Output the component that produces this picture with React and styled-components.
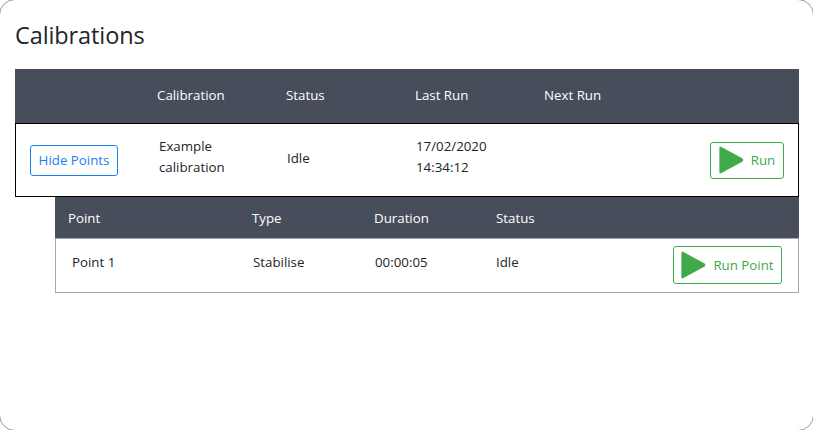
import React from "react";
import styled, { createGlobalStyle } from "styled-components";

const GlobalStyle = createGlobalStyle`
	html, body {
		margin: 0;
		padding: 0;
		background: #fff;
		overflow: hidden;
	}
	body {
		font-family: "Open Sans", "Noto Sans", sans-serif;
		font-size: 13.3px;
		color: #212529;
	}
`;

const Clip = styled.div`
	width: 813px;
	height: 430px;
	overflow: hidden;
`;

const Page = styled.div`
	box-sizing: border-box;
	width: 815px;
	height: 432px;
	margin: -1px;
	padding: 16px 15px 0;
	border: 1px solid #9a9a9a;
	border-radius: 16px;
	background: #fff;
`;

const Title = styled.h1`
	margin: 0 0 17px;
	height: 36px;
	line-height: 39px;
	font-size: 23.5px;
	font-weight: 400;
	letter-spacing: -0.1px;
	color: #212529;
`;

const Content = styled.div`
	width: 784px;
`;

const HeadRow = styled.div`
	box-sizing: border-box;
	display: grid;
	grid-template-columns: ${(props) => props.$columns};
	align-items: center;
	height: ${(props) => props.$height}px;
	padding-bottom: ${(props) => props.$lift || 0}px;
	background: #484d5b;
	color: #fff;
`;

const CalibrationRow = styled.div`
	box-sizing: border-box;
	display: grid;
	grid-template-columns: 143px 128px 129px 129px 1fr;
	align-items: center;
	height: 74px;
	border: 1px solid #000;
	line-height: 21px;
`;

const Points = styled.div`
	margin-left: 40px;
`;

const PointRow = styled.div`
	box-sizing: border-box;
	display: grid;
	grid-template-columns: 181px 122px 121px 1fr auto;
	align-items: center;
	height: 55px;
	padding-left: 16px;
	padding-right: 16px;
	border: 1px solid #a5a7ad;
`;

const Cell = styled.div`
	padding-left: ${(props) => props.$pad || 0}px;
	margin-top: ${(props) => props.$up || 0}px;
`;

const OutlineButton = styled.button`
	box-sizing: border-box;
	display: inline-flex;
	align-items: center;
	justify-content: center;
	gap: ${(props) => props.$gap || 0}px;
	height: ${(props) => props.$height}px;
	width: ${(props) => props.$width}px;
	margin-top: ${(props) => props.$up || 0}px;
	padding: 0;
	background: #fff;
	border: 1px solid ${(props) => props.$color};
	border-radius: 3px;
	color: ${(props) => props.$color};
	font-family: inherit;
	font-size: 13.3px;
`;

const ButtonCell = styled.div`
	display: flex;
	justify-content: ${(props) => props.$align || "flex-start"};
	padding: ${(props) => props.$padding || 0};
`;

const Play = () => (
	<svg width="25" height="28" viewBox="0 0 25 28">
		<path
			d="M2 0.8 L23.6 12.4 Q25 14 23.6 15.6 L2 27.2 Q0.4 27.6 0.4 26 L0.4 2 Q0.4 0.4 2 0.8 Z"
			fill="#40a94a"
		/>
	</svg>
);

const App = () => {
	return (
		<Clip>
			<GlobalStyle />
			<Page>
				<Title>Calibrations</Title>
				<Content>
					<HeadRow $columns="142px 129px 129px 129px 1fr" $height={54} $lift={2}>
						<span />
						<span>Calibration</span>
						<span>Status</span>
						<span>Last Run</span>
						<span>Next Run</span>
					</HeadRow>
					<CalibrationRow>
						<ButtonCell $padding="0 0 0 14px">
							<OutlineButton $color="#1b80f5" $width={88} $height={31}>
								Hide Points
							</OutlineButton>
						</ButtonCell>
						<Cell $up={-6}>
							Example
							<br />
							calibration
						</Cell>
						<Cell $up={-3}>Idle</Cell>
						<Cell $up={-6}>
							17/02/2020
							<br />
							14:34:12
						</Cell>
						<ButtonCell $align="flex-end" $padding="0 14px 0 0">
							<OutlineButton $color="#40a94a" $width={74} $height={37} $gap={7}>
								<Play />
								Run
							</OutlineButton>
						</ButtonCell>
					</CalibrationRow>
					<Points>
						<HeadRow $columns="197px 122px 122px 1fr" $height={41}>
							<Cell $pad={13}>Point</Cell>
							<span>Type</span>
							<span>Duration</span>
							<span>Status</span>
						</HeadRow>
						<PointRow>
							<Cell $up={-8}>Point 1</Cell>
							<Cell $up={-8}>Stabilise</Cell>
							<Cell $up={-8}>00:00:05</Cell>
							<Cell $up={-8}>Idle</Cell>
							<OutlineButton $color="#40a94a" $width={109} $height={38} $gap={7} $up={-1}>
								<Play />
								Run Point
							</OutlineButton>
						</PointRow>
					</Points>
				</Content>
			</Page>
		</Clip>
	);
};

export default App;
